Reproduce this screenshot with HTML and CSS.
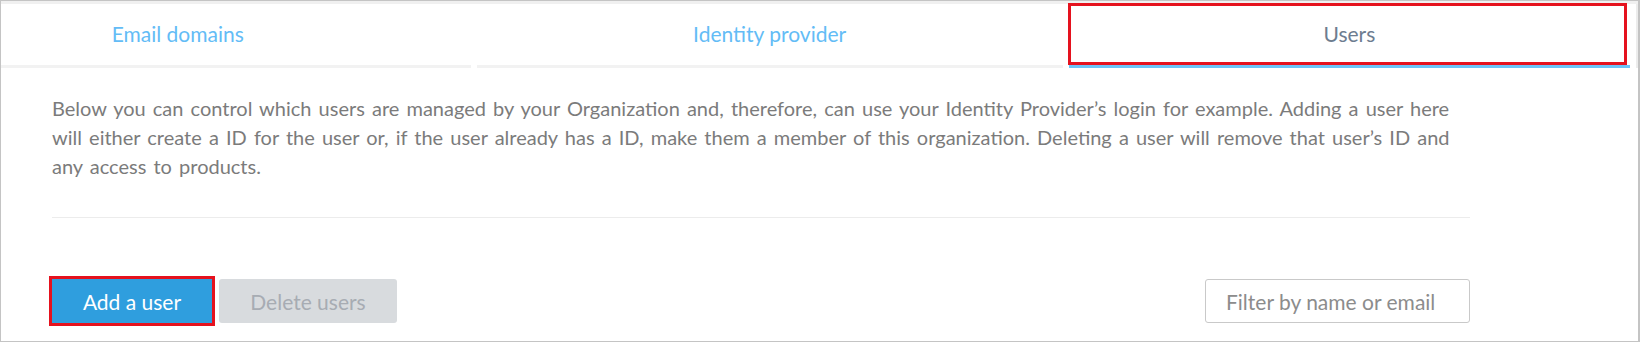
FILE: index.html
```html
<!DOCTYPE html>
<html>
<head>
<meta charset="utf-8">
<link rel="stylesheet" href="styles.css">
</head>
<body>
<div class="frame">
  <div class="topband"></div>
  <div class="tabs">
    <div class="tab tab-email">Email domains</div>
    <div class="tab tab-idp">Identity provider</div>
    <div class="tab tab-users active">Users<span class="mark"></span></div>
    <div class="tab-rest"></div>
  </div>
  <div class="content">
    <p class="intro">Below you can control which users are managed by your Organization and, therefore, can use your Identity Provider’s login for example. Adding a user here will either create a ID for the user or, if the user already has a ID, make them a member of this organization. Deleting a user will remove that user’s ID and any access to products.</p>
    <div class="divider"></div>
    <div class="actions">
      <button class="btn btn-primary">Add a user</button>
      <button class="btn btn-disabled">Delete users</button>
      <div class="spacer"></div>
      <input class="filter" type="text" placeholder="Filter by name or email">
    </div>
  </div>
</div>
</body>
</html>
```

FILE: styles.css
```css
* { box-sizing: border-box; }
html, body { margin: 0; padding: 0; background: #fff; }
body { font-family: Lato, "Open Sans", sans-serif; }

.frame {
  width: 1640px;
  height: 342px;
  border: 1px solid #c4c4c4;
  border-right-width: 2px;
  background: #fff;
  overflow: hidden;
}
.topband { height: 3px; background: #f0f0f0; }

.tabs { display: flex; gap: 6px; height: 64px; }
.tab {
  position: relative;
  height: 64px;
  border-bottom: 3px solid #f2f2f2;
  display: flex;
  align-items: center;
  justify-content: center;
  font-size: 21px;
  color: #63bcf6;
  padding-bottom: 3px;
}
.tab-email { width: 470px; padding-right: 116px; }
.tab-idp { width: 587px; }
.tab-users { width: 562px; color: #6d7d90; border-bottom-color: #6cc4f7; }
.tab-rest { flex: 1; border-left: 2px solid #ececec; }
.mark {
  position: absolute;
  left: -1px;
  top: -1px;
  width: 559px;
  height: 62px;
  border: 3px solid #e5121e;
}

.content { padding: 0 168px 0 51px; }
.intro {
  margin: 26px 0 0;
  max-width: 1404px;
  font-size: 20px;
  word-spacing: 2px;
  line-height: 29px;
  color: #7b7b7b;
}
.divider { height: 1px; background: #ececec; margin-top: 36px; }

.actions { display: flex; align-items: center; margin-top: 61px; }
.btn {
  height: 44px;
  border: none;
  border-radius: 3px;
  font-family: Lato, "Open Sans", sans-serif;
  font-size: 21px;
  padding: 0;
}
.btn-primary {
  width: 160px;
  background: #2f9ede;
  color: #fff;
  border-radius: 0;
  outline: 3px solid #e5121e;
}
.btn-disabled {
  width: 178px;
  margin-left: 7px;
  background: #d8dbde;
  color: #a7acb3;
}
.spacer { flex: 1; }
.filter {
  width: 265px;
  height: 44px;
  border: 1px solid #c9c9c9;
  border-radius: 3px;
  padding: 0 0 0 20px;
  font-family: Lato, "Open Sans", sans-serif;
  font-size: 21px;
  color: #555;
}
.filter::placeholder { color: #8c8c8c; }
```
